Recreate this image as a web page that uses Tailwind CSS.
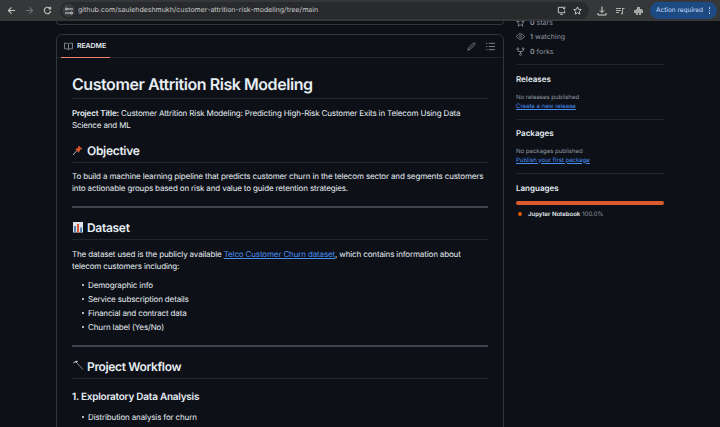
<!DOCTYPE html>
<html lang="en">
<head>
  <meta charset="UTF-8">
  <script src="https://cdn.jsdelivr.net/npm/@tailwindcss/browser@4"></script>
  <title>Customer Attrition Risk Modeling</title>
</head>
<body class="bg-[#0d1117] font-['Inter',sans-serif] [text-rendering:geometricPrecision] h-[427px] w-[720px] overflow-hidden text-[#e6edf3]">
  <!-- browser toolbar -->
  <div class="relative z-10 h-[21px] bg-[#363739] flex items-center pl-[7px] pr-[3px]">
    <div class="flex items-center gap-[9px] w-[53px] text-[#c4c7c5]">
      <svg class="w-[9px] h-[9px]" viewBox="0 0 10 10" fill="none" stroke="currentColor" stroke-width="1.2"><path d="M9 5H1.500M5 1.500 1.500 5 5 8.500"/></svg>
      <svg class="w-[9px] h-[9px] opacity-40" viewBox="0 0 10 10" fill="none" stroke="currentColor" stroke-width="1.2"><path d="M1 5h7.500M5 1.500 8.500 5 5 8.500"/></svg>
      <svg class="w-[9px] h-[9px]" viewBox="0 0 10 10" fill="none" stroke="currentColor" stroke-width="1.2"><path d="M8.600 5.500A3.600 3.600 0 1 1 7.600 2.400M8.500 .8v2.400H6.100"/></svg>
    </div>
    <div class="h-[17px] flex-1 rounded-full bg-[#292a2d] flex items-center pl-[2px] pr-[7px]">
      <span class="w-[13px] h-[13px] rounded-full bg-[#3c3d40] flex items-center justify-center mr-[3px]">
        <svg class="w-[8px] h-[8px] text-[#d5d7d6]" viewBox="0 0 8 8" fill="none" stroke="currentColor"><path d="M3 2h5M0 6h5"/><circle cx="1.500" cy="2" r="1"/><circle cx="6.500" cy="6" r="1"/></svg>
      </span>
      <span class="text-[7px] text-[#c8cacb] whitespace-nowrap">github.com/saulehdeshmukh/customer-attrition-risk-modeling/tree/main</span>
      <span class="ml-auto flex items-center gap-[7px] text-[#d5d7d6]">
        <svg class="w-[9px] h-[9px]" viewBox="0 0 10 10" fill="none" stroke="currentColor"><path d="M7 1.500H1.500v6h7V5M3.500 9.300h3M8 .5v3M6.500 2l1.500 1.500L9.500 2"/></svg>
        <svg class="w-[9px] h-[9px]" viewBox="0 0 10 10" fill="none" stroke="currentColor"><path d="M5 1 6.200 3.700 9.200 4 7 6l.6 3L5 7.500 2.400 9 3 6 .8 4l3-.3z"/></svg>
      </span>
    </div>
    <div class="flex items-center gap-[8px] ml-[8px] text-[#d5d7d6]">
      <svg class="w-[10px] h-[10px]" viewBox="0 0 10 10" fill="none" stroke="currentColor"><path d="M5 .5v6M2.800 4.300 5 6.500l2.200-2.200M1 7v2h8V7"/></svg>
      <svg class="w-[10px] h-[10px]" viewBox="0 0 10 10" fill="currentColor"><path d="M1 2h5v1H1zM1 4h5v1H1zM1 6h3v1H1zM7 2h2.500v1H8v4.500a1 1 0 1 1-1-1z" opacity=".75"/></svg>
      <svg class="w-[11px] h-[10px]" viewBox="0 0 11 10" fill="currentColor"><path d="M4 1h3v2h2v1H10v3H8v2H6V7H5v2H3V7H1V4h2V3h1z" opacity=".7"/></svg>
    </div>
    <div class="ml-[6px] h-[17px] w-[67px] shrink-0 rounded-full bg-[#1d4a82] flex items-center pl-[6px] text-[6.500px] text-[#c9dcf5] whitespace-nowrap">Action required<span class="ml-auto mr-[7px] flex flex-col gap-[1px]"><i class="w-[1.500px] h-[1.500px] bg-[#c9dcf5] rounded-full"></i><i class="w-[1.500px] h-[1.500px] bg-[#c9dcf5] rounded-full"></i><i class="w-[1.500px] h-[1.500px] bg-[#c9dcf5] rounded-full"></i></span></div>
  </div>

  <div class="flex pl-[56px] gap-[12px] h-[406px] overflow-hidden">
    <!-- main column -->
    <main class="w-[448px] shrink-0">
      <div class="h-[4px] border border-t-0 border-[#30363d] rounded-b-md"></div>
      <div class="mt-[9px] border border-[#30363d] rounded-t-md h-[500px]">
        <div class="h-[23px] border-b border-[#21262d] flex items-center pl-[7px] pr-[8px] relative">
          <svg class="w-[9px] h-[9px] text-[#9198a1] mr-[4px]" viewBox="0 0 16 16" fill="none" stroke="currentColor" stroke-width="1.500"><path d="M8 3.500C6.500 2 4 2 1 2v10c3 0 5.500 0 7 1.500 1.500-1.500 4-1.500 7-1.500V2c-3 0-5.500 0-7 1.500zM8 3.500v10"/></svg>
          <span class="text-[7px] font-semibold tracking-[-0.1px]">README</span>
          <span class="absolute left-[4px] bottom-[-1px] w-[49px] h-[1px] bg-[#f78166]"></span>
          <span class="ml-auto flex items-center gap-[10px] text-[#9198a1]">
            <svg class="w-[9px] h-[9px]" viewBox="0 0 10 10" fill="none" stroke="currentColor" stroke-width=".9"><path d="M1 9 1.600 6.800 7 1.400a1 1 0 0 1 1.500 1.500L3.200 8.400z"/></svg>
            <svg class="w-[9px] h-[9px]" viewBox="0 0 10 10" fill="none" stroke="currentColor" stroke-width=".9"><path d="M3 1.500h7M3 5h7M3 8.500h7M0 1.500h1.500M0 5h1.500M0 8.500h1.500"/></svg>
          </span>
        </div>

        <article class="px-[15px] text-[8px] leading-[12px] tracking-[-0.14px] text-[#e6edf3]">
          <h1 class="text-[16px] leading-[20px] tracking-[-0.44px] font-semibold pt-[16px] border-b border-[#21262d] h-[41px]">Customer Attrition Risk Modeling</h1>
          <p class="mt-[8px]"><b class="font-semibold">Project Title:</b> Customer Attrition Risk Modeling: Predicting High-Risk Customer Exits in Telecom Using Data Science and ML</p>

          <h2 class="mt-[12px] h-[20px] text-[12px] leading-[15px] tracking-[-0.3px] font-semibold border-b border-[#21262d] flex items-start gap-[3px]">
            <svg class="w-[12px] h-[12px] mt-[1px]" viewBox="0 0 12 12"><path d="M1 11 5 6.500" stroke="#b8b8b8" stroke-width="1"/><path d="M6.500 1.500 10.500 5 8.300 5.600 6.800 8.700 3.300 5.200 6 3.800z" fill="#d9562f"/></svg>
            <span>Objective</span>
          </h2>
          <p class="mt-[7px]">To build a machine learning pipeline that predicts customer churn in the telecom sector and segments customers into actionable groups based on risk and value to guide retention strategies.</p>
          <hr class="mt-[12px] h-[2px] border-0 bg-[#3d444d]">

          <h2 class="mt-[12px] h-[20px] text-[12px] leading-[15px] tracking-[-0.3px] font-semibold border-b border-[#21262d] flex items-start gap-[3px]">
            <svg class="w-[12px] h-[12px] mt-[1px]" viewBox="0 0 12 12"><rect x="1" y="1" width="10" height="10.500" fill="#dde3ea"/><rect x="2" y="5" width="2" height="6.500" fill="#4d7fb5"/><rect x="5" y="3" width="2" height="8.500" fill="#d9562f"/><rect x="8" y="6.500" width="2" height="5" fill="#4d7fb5"/></svg>
            <span>Dataset</span>
          </h2>
          <p class="mt-[8px]">The dataset used is the publicly available <a class="text-[#4a8ff0] underline" href="#">Telco Customer Churn dataset</a>, which contains information about telecom customers including:</p>
          <ul class="mt-[6px] pl-[16px] leading-[14px]">
            <li class="relative before:absolute before:left-[-6px] before:top-[6px] before:w-[2px] before:h-[2px] before:rounded-full before:bg-[#e6edf3]">Demographic info</li>
            <li class="relative before:absolute before:left-[-6px] before:top-[6px] before:w-[2px] before:h-[2px] before:rounded-full before:bg-[#e6edf3]">Service subscription details</li>
            <li class="relative before:absolute before:left-[-6px] before:top-[6px] before:w-[2px] before:h-[2px] before:rounded-full before:bg-[#e6edf3]">Financial and contract data</li>
            <li class="relative before:absolute before:left-[-6px] before:top-[6px] before:w-[2px] before:h-[2px] before:rounded-full before:bg-[#e6edf3]">Churn label (Yes/No)</li>
          </ul>
          <hr class="mt-[11px] h-[2px] border-0 bg-[#3d444d]">

          <h2 class="mt-[12px] h-[20px] text-[12px] leading-[15px] tracking-[-0.35px] font-semibold border-b border-[#21262d] flex items-start gap-[3px]">
            <svg class="w-[12px] h-[12px] mt-[0px]" viewBox="0 0 12 12" fill="none"><path d="M4 3 11 10.500" stroke="#8a8a8a" stroke-width="1"/><path d="M1 4.500C2 2.500 4 1.500 6 2L4.500 4 3.500 3.300z" fill="#c9c9c9"/></svg>
            <span>Project Workflow</span>
          </h2>
          <h3 class="mt-[12px] text-[10px] leading-[13px] tracking-[-0.25px] font-semibold">1. Exploratory Data Analysis</h3>
          <ul class="mt-[6px] pl-[16px] leading-[14px]">
            <li class="relative before:absolute before:left-[-6px] before:top-[6px] before:w-[2px] before:h-[2px] before:rounded-full before:bg-[#e6edf3]">Distribution analysis for churn</li>
          </ul>
        </article>
      </div>
    </main>

    <!-- sidebar -->
    <aside class="w-[148px] shrink-0 text-[6px] text-[#9198a1]">
      <ul class="flex flex-col gap-[5.500px] pb-[8.500px] border-b border-[#21262d] -mt-[3.500px]">
        <li class="flex items-center gap-[5px] h-[9px]">
          <svg class="w-[9px] h-[9px] shrink-0" viewBox="0 0 10 10" fill="none" stroke="currentColor" stroke-width=".9"><path d="M5 1 6.200 3.700 9.200 4 7 6l.6 3L5 7.500 2.400 9 3 6 .8 4l3-.3z"/></svg>
          <span class="text-[7px] leading-[9px]"><b class="font-semibold">0</b> stars</span>
        </li>
        <li class="flex items-center gap-[5px] h-[9px]">
          <svg class="w-[9px] h-[9px] shrink-0" viewBox="0 0 10 10" fill="none" stroke="currentColor" stroke-width=".9"><path d="M.6 5C2 2.600 3.500 2 5 2s3 .6 4.400 3C8 7.400 6.500 8 5 8S2 7.400.6 5z"/><circle cx="5" cy="5" r="1.200"/></svg>
          <span class="text-[7px] leading-[9px]"><b class="font-semibold">1</b> watching</span>
        </li>
        <li class="flex items-center gap-[5px] h-[9px]">
          <svg class="w-[9px] h-[9px] shrink-0" viewBox="0 0 10 10" fill="none" stroke="currentColor" stroke-width=".9"><circle cx="2" cy="2" r="1.100"/><circle cx="8" cy="2" r="1.100"/><circle cx="5" cy="8.200" r="1.100"/><path d="M2 3v.8c0 .7.500 1.200 1.200 1.200h3.600C7.500 5 8 4.500 8 3.800V3M5 5v2"/></svg>
          <span class="text-[7px] leading-[9px]"><b class="font-semibold">0</b> forks</span>
        </li>
      </ul>

      <section class="border-b border-[#21262d] pt-[8px] pb-[8px]">
        <h2 class="text-[8px] leading-[12px] font-semibold text-[#e6edf3]">Releases</h2>
        <p class="mt-[8.500px] leading-[8px]">No releases published</p>
        <a class="block leading-[9px] text-[#4a8ff0] underline" href="#">Create a new release</a>
      </section>
      <section class="border-b border-[#21262d] pt-[7.500px] pb-[8.500px]">
        <h2 class="text-[8px] leading-[12px] font-semibold text-[#e6edf3]">Packages</h2>
        <p class="mt-[8.500px] leading-[8px]">No packages published</p>
        <a class="block leading-[9px] text-[#4a8ff0] underline" href="#">Publish your first package</a>
      </section>
      <section class="pt-[8px]">
        <h2 class="text-[8px] leading-[12px] font-semibold text-[#e6edf3]">Languages</h2>
        <div class="mt-[7px] h-[4px] rounded-full bg-[#da5b2d]"></div>
        <div class="mt-[4.500px] flex items-center pl-[2px] leading-[9px]">
          <span class="w-[4px] h-[4px] rounded-full bg-[#da5b0b] mr-[6px]"></span>
          <b class="font-semibold text-[#e6edf3] mr-[2px]">Jupyter Notebook</b> 100.0%
        </div>
      </section>
    </aside>
  </div>
</body>
</html>
